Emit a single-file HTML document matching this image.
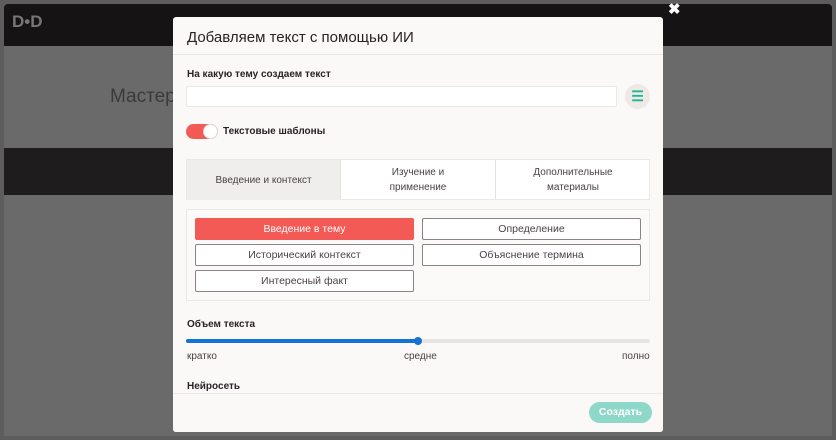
<!DOCTYPE html><html><head><meta charset="utf-8"><style>
*{box-sizing:border-box;margin:0;padding:0}
body{width:836px;height:440px;background:#5d5d5d;font-family:"Liberation Sans",sans-serif;position:relative;overflow:hidden}
.abs{position:absolute}
.m{left:173px;top:17px;width:490px;height:415px;background:#faf9f7;border-radius:3px;overflow:hidden}
.t{color:#2b2228;font-weight:bold;font-size:11px}
.btn{position:absolute;height:22px;border:1px solid #8a8387;border-radius:2px;font-size:10.5px;color:#4a4247;text-align:center;line-height:20px;background:#fff}
.tab{position:absolute;top:0;height:40px;font-size:10px;color:#4a4247;text-align:center;display:flex;align-items:center;justify-content:center;line-height:15px;border-right:1px solid #e5e3e1}
</style></head><body>
<div class="abs" style="left:4px;top:4px;width:828px;height:42px;background:#151314;border-radius:4px 4px 0 0"></div>
<div class="abs" style="left:4px;top:46px;width:828px;height:390px;background:#6a6a6a"></div>
<div class="abs" style="left:4px;top:148px;width:828px;height:47px;background:#1e1c1d"></div>
<div class="abs" style="left:12px;top:12px;color:#777;font-weight:bold;font-size:17px">D•D</div>
<div class="abs" style="left:110px;top:86px;color:#3a3a3a;font-size:19px">Мастер</div>
<div class="abs" style="left:668px;top:0px;color:#fff;font-size:15px;font-weight:bold">✖</div>
<div class="abs m">
 <div class="abs" style="left:14px;top:12px;font-size:15px;color:#2b2228">Добавляем текст с помощью ИИ</div>
 <div class="abs" style="left:0;top:37px;width:490px;height:1px;background:#e8e6e4"></div>
 <div class="abs t" style="left:14px;top:52px;font-size:10px">На какую тему создаем текст</div>
 <div class="abs" style="left:13px;top:69px;width:431px;height:21px;background:#fff;border:1px solid #ebe9e7;border-radius:2px"></div>
 <div class="abs" style="left:452px;top:67px;width:25px;height:25px;border-radius:50%;background:#efe9e6;color:#1fb597;font-size:14px;text-align:center;line-height:25px;font-weight:bold">☰</div>
 <div class="abs" style="left:13px;top:107px;width:32px;height:15px;border-radius:8px;background:#f45a55"></div>
 <div class="abs" style="left:30px;top:107px;width:15px;height:15px;border-radius:50%;background:#fff;border:1px solid #ddd"></div>
 <div class="abs t" style="left:50px;top:109px;font-size:10px">Текстовые шаблоны</div>
 <div class="abs" style="left:13px;top:142px;width:464px;height:41px;border:1px solid #ebe9e7;background:#fff">
  <div class="tab" style="left:0;width:154px;background:#efeeed">Введение и контекст</div>
  <div class="tab" style="left:154px;width:155px">Изучение и<br>применение</div>
  <div class="tab" style="left:309px;width:154px;border:0">Дополнительные<br>материалы</div>
 </div>
 <div class="abs" style="left:13px;top:192px;width:464px;height:92px;border:1px solid #ebe9e7;background:#fbfaf9"></div>
 <div class="btn" style="left:22px;top:201px;width:219px;background:#f45a55;border-color:#f45a55;color:#fff">Введение в тему</div>
 <div class="btn" style="left:249px;top:201px;width:219px">Определение</div>
 <div class="btn" style="left:22px;top:227px;width:219px">Исторический контекст</div>
 <div class="btn" style="left:249px;top:227px;width:219px">Объяснение термина</div>
 <div class="btn" style="left:22px;top:253px;width:219px">Интересный факт</div>
 <div class="abs t" style="left:14px;top:302px;font-size:10px">Объем текста</div>
 <div class="abs" style="left:13px;top:322px;width:464px;height:4px;background:#e6e4e2;border-radius:2px"></div>
 <div class="abs" style="left:13px;top:322px;width:232px;height:4px;background:#1473d4;border-radius:2px"></div>
 <div class="abs" style="left:241px;top:320px;width:8px;height:8px;border-radius:50%;background:#1473d4"></div>
 <div class="abs" style="left:14px;top:334px;font-size:10px;color:#4a4247">кратко</div>
 <div class="abs" style="left:231px;top:334px;font-size:10px;color:#4a4247">средне</div>
 <div class="abs" style="left:449px;top:334px;font-size:10px;color:#4a4247">полно</div>
 <div class="abs t" style="left:14px;top:364px;font-size:10px">Нейросеть</div>
 <div class="abs" style="left:0;top:376px;width:490px;height:39px;background:#faf9f7;border-top:1px solid #ebe9e7"></div>
 <div class="abs" style="left:416px;top:385px;width:63px;height:21px;border-radius:11px;background:#8ed8c9;color:#fff;font-size:10.5px;font-weight:bold;text-align:center;line-height:21px">Создать</div>
</div>
</body></html>
